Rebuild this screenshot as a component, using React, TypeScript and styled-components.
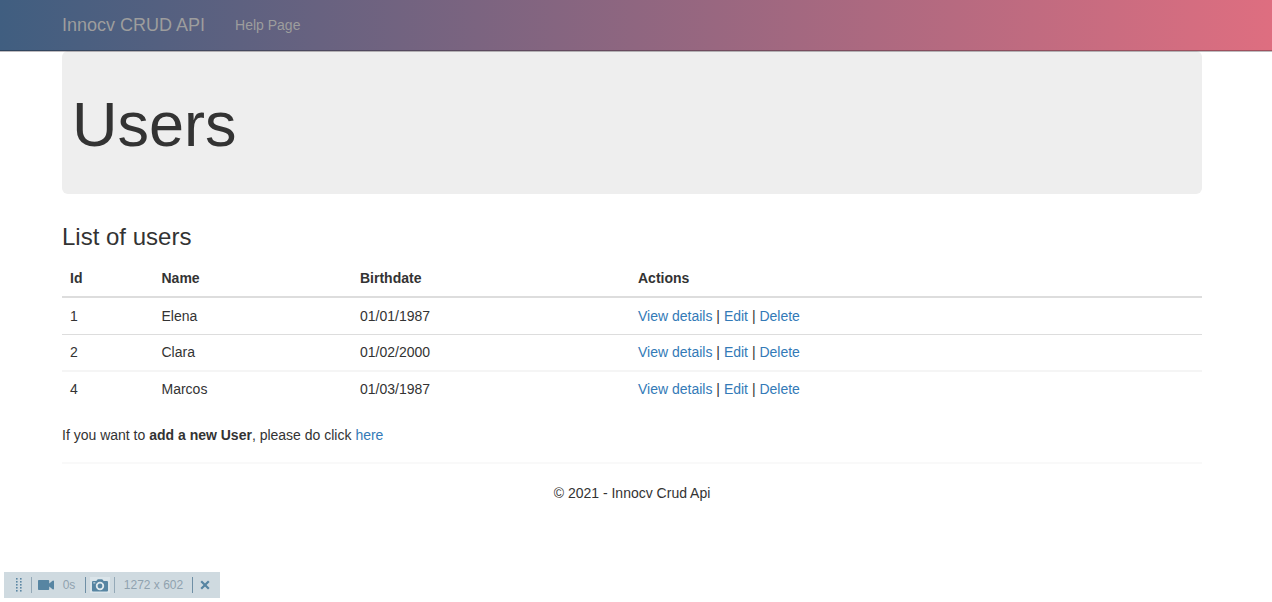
import React from "react";
import styled, { createGlobalStyle } from "styled-components";

const GlobalStyle = createGlobalStyle`
  *, *::before, *::after { box-sizing: border-box; }
  body {
    margin: 0;
    background: #fff;
    color: #333;
    font: 14px/20px "Liberation Sans", Arial, sans-serif;
  }
`;

const Navbar = styled.nav`
  height: 51px;
  background: linear-gradient(to right, #405e80, #de6e80) border-box;
  border-bottom: 1px solid rgba(8, 8, 8, 0.28);
  box-shadow: 0 1px 0 rgba(70, 60, 70, 0.35);
  position: relative;
  z-index: 1;
`;

const Container = styled.div`
  width: 1140px;
  margin-left: 62px;
`;

const NavContent = styled(Container)`
  display: flex;
  align-items: center;
  height: 50px;
  gap: 30px;
`;

const NavLink = styled.a<{ $brand?: boolean }>`
  color: #9d9d9d;
  font-size: ${(p) => (p.$brand ? "18px" : "14px")};
  text-decoration: none;
`;

const Jumbotron = styled.header`
  height: 143px;
  padding: 42px 10px 0;
  background: #eee;
  border-radius: 6px;
`;

const PageTitle = styled.h1`
  margin: 0;
  font-size: 63px;
  font-weight: 400;
  line-height: 63px;
`;

const SectionTitle = styled.h3`
  margin: 30px 0 10px;
  font-size: 24px;
  font-weight: 400;
  line-height: 26px;
`;

const Table = styled.table`
  width: 100%;
  table-layout: fixed;
  border-spacing: 0;
`;

const HeadCell = styled.th<{ $width: string }>`
  width: ${(p) => p.$width};
  padding: 8px;
  text-align: left;
  border-bottom: 2px solid #ddd;
`;

const Row = styled.tr<{ $line?: string }>`
  td {
    padding: 8px;
    border-bottom: ${(p) => p.$line ?? "none"};
  }
  &:not(:first-child) td {
    padding-top: 7px;
  }
`;

const Link = styled.a`
  color: #337ab7;
  text-decoration: none;
`;

const Note = styled.p`
  margin: 18px 0 0;
`;

const Footer = styled.footer`
  margin-top: 17px;
  padding-top: 19px;
  border-top: 2px solid #f9f9f9;
  text-align: center;
`;

const Recorder = styled.aside`
  position: fixed;
  left: 4px;
  bottom: 4px;
  width: 216px;
  height: 26px;
  display: flex;
  align-items: center;
  background: #cfdae0;
  color: #8fa2af;
  font-size: 12px;
  line-height: 26px;
  white-space: nowrap;
`;

const Slot = styled.span<{ $width: number; $lit?: boolean }>`
  width: ${(p) => p.$width}px;
  height: ${(p) => (p.$lit ? "16px" : "26px")};
  background: ${(p) => (p.$lit ? "#dbe5ea" : "transparent")};
  display: flex;
  align-items: center;
  justify-content: center;
  flex: none;
`;

const GripSlot = styled(Slot)`
  padding-left: 3px;
`;

const Divider = styled.i<{ $dark?: boolean }>`
  width: 1px;
  height: 16px;
  flex: none;
  background: ${(p) => (p.$dark ? "#6f8fa5" : "#94a9b7")};
`;

const Grip = () => (
  <svg width="8" height="16" viewBox="0 0 8 16" fill="#5b87a3">
    {[1, 4, 7, 10, 13].map((y) => (
      <g key={y}>
        <rect x="1" y={y} width="1.6" height="1.6" />
        <rect x="5" y={y} width="1.6" height="1.6" />
      </g>
    ))}
  </svg>
);

const VideoIcon = () => (
  <svg width="16" height="12" viewBox="0 0 16 12" fill="#5785a2">
    <path d="M.8 1h9.6q.8 0 .8.8v2.6L14.6 1.8q1.2-.6 1.4.4v7.6q-.2 1-1.4.4l-3.4-2.6v2.6q0 .8-.8.8H.8q-.8 0-.8-.8V1.8Q0 1 .8 1z" />
  </svg>
);

const CameraIcon = () => (
  <svg width="16" height="13" viewBox="0 0 16 13">
    <path fill="#5785a2" d="M1 2h3.4Q5 .3 6.2.3h3.6Q11 .3 11.6 2H15q1 0 1 1v8.5q0 1-1 1H1q-1 0-1-1V3q0-1 1-1z" />
    <circle cx="8" cy="7" r="3.3" fill="none" stroke="#e1eaee" strokeWidth="1.8" />
    <rect x="1.3" y="3.4" width="2" height="1" fill="#e1eaee" />
  </svg>
);

const CloseIcon = () => (
  <svg width="10" height="10" viewBox="0 0 10 10" stroke="#5785a2" strokeWidth="2.2">
    <path d="M1.2 1.2l7.6 7.6M8.8 1.2L1.2 8.8" />
  </svg>
);

const users = [
  { id: 1, name: "Elena", birthdate: "01/01/1987", line: "1px solid #ddd" },
  { id: 2, name: "Clara", birthdate: "01/02/2000", line: "2px solid #f5f5f5" },
  { id: 4, name: "Marcos", birthdate: "01/03/1987" },
];

export default function App() {
  return (
    <>
      <GlobalStyle />
      <Navbar>
        <NavContent>
          <NavLink $brand>Innocv CRUD API</NavLink>
          <NavLink>Help Page</NavLink>
        </NavContent>
      </Navbar>
      <Container>
        <Jumbotron>
          <PageTitle>Users</PageTitle>
        </Jumbotron>
        <SectionTitle>List of users</SectionTitle>
        <Table>
          <thead>
            <tr>
              <HeadCell $width="91.5px">Id</HeadCell>
              <HeadCell $width="198.5px">Name</HeadCell>
              <HeadCell $width="278px">Birthdate</HeadCell>
              <HeadCell $width="auto">Actions</HeadCell>
            </tr>
          </thead>
          <tbody>
            {users.map((user) => (
              <Row key={user.id} $line={user.line}>
                <td>{user.id}</td>
                <td>{user.name}</td>
                <td>{user.birthdate}</td>
                <td>
                  <Link>View details</Link> | <Link>Edit</Link> | <Link>Delete</Link>
                </td>
              </Row>
            ))}
          </tbody>
        </Table>
        <Note>
          If you want to <b>add a new User</b>, please do click <Link>here</Link>
        </Note>
        <Footer>© 2021 - Innocv Crud Api</Footer>
      </Container>
      <Recorder>
        <GripSlot $width={27}><Grip /></GripSlot>
        <Divider />
        <Slot $width={28}><VideoIcon /></Slot>
        <Slot $width={18}>0s</Slot>
        <Slot $width={7} />
        <Divider $dark />
        <Slot $width={4} />
        <Slot $width={20} $lit><CameraIcon /></Slot>
        <Slot $width={4} />
        <Divider />
        <Slot $width={77}>1272 x 602</Slot>
        <Divider $dark />
        <Slot $width={24}><CloseIcon /></Slot>
      </Recorder>
    </>
  );
}
